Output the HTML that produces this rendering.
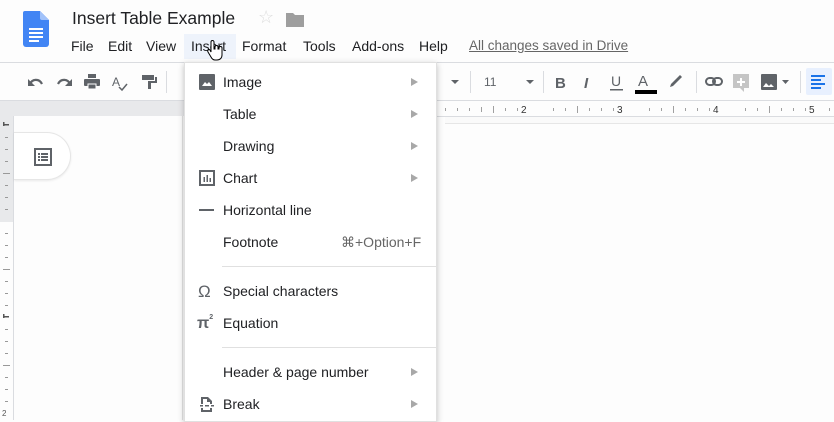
<!DOCTYPE html>
<html><head><meta charset="utf-8"><style>
*{margin:0;padding:0;box-sizing:border-box}
body{width:834px;height:420px;overflow:hidden;background:#fdfdfd;font-family:"Liberation Sans",Arial,sans-serif;position:relative;color:#222}
.a{position:absolute}
.mi{position:absolute;left:223px;font-size:14px;color:#202124}
.arr{position:absolute;left:411px;width:0;height:0;border-left:7px solid #a8a8a8;border-top:4px solid transparent;border-bottom:4px solid transparent}
</style></head><body>
<svg class="a" style="left:23px;top:11px" width="26" height="36" viewBox="0 0 26 36"><path d="M2 0h15l9 9v24a3 3 0 0 1-3 3H3a3 3 0 0 1-3-3V2a2 2 0 0 1 2-2z" fill="#4285f4"/><path d="M17 0l9 9h-7a2 2 0 0 1-2-2z" fill="#a1c2fa"/><rect x="6" y="17" width="14" height="2" fill="#fff"/><rect x="6" y="21" width="14" height="2" fill="#fff"/><rect x="6" y="25" width="14" height="2" fill="#fff"/><rect x="6" y="29" width="10" height="2" fill="#fff"/></svg>
<div class="a" style="left:72px;top:8px;font-size:17.5px;color:#202124">Insert Table Example</div>
<div class="a" style="left:258px;top:7px;font-size:18px;color:#ddd">☆</div>
<svg class="a" style="left:286px;top:12px" width="18" height="15"><path d="M0 1h7l2 2h9v12H0z" fill="#9e9e9e"/></svg>
<div class="a" style="left:184px;top:34px;width:52px;height:25px;background:#eef3fb"></div>
<div class="a" style="top:38px;left:0;font-size:14px;color:#202124;white-space:nowrap">
<span class="a" style="left:71px">File</span><span class="a" style="left:108px">Edit</span><span class="a" style="left:146px">View</span><span class="a" style="left:191px">Insert</span><span class="a" style="left:242px">Format</span><span class="a" style="left:303px">Tools</span><span class="a" style="left:352px">Add-ons</span><span class="a" style="left:419px">Help</span><span class="a" style="left:469px;color:#666;text-decoration:underline;font-size:13.5px">All changes saved in Drive</span></div>
<div class="a" style="left:0;top:62px;width:834px;height:1px;background:#dadce0"></div>
<div class="a" style="left:0;top:100px;width:834px;height:16px;background:#e8e9eb"></div>
<div class="a" style="left:0;top:100px;width:834px;height:1px;background:#dadce0"></div>
<div class="a" style="left:437px;top:101px;width:397px;height:16px;background:#fdfdfd;border-bottom:1px solid #dadce0"></div>
<div class="a" style="left:445px;top:117px;width:389px;height:7px;background:#fafafa;border-bottom:1px solid #e6e6e6"></div>
<svg class="a" style="left:0;top:63px" width="834" height="37" fill="#5f6368">
<path d="M30 21c2-5 9-6 12 0" stroke="#5f6368" stroke-width="2.2" fill="none"/><path d="M28 16v7h7z"/>
<path d="M70 21c-2-5-9-6-12 0" stroke="#5f6368" stroke-width="2.2" fill="none"/><path d="M72 16v7h-7z"/>
<rect x="84" y="16" width="16" height="7" rx="1"/><rect x="88" y="11" width="8" height="4"/><rect x="88" y="21" width="8" height="5" fill="#5f6368" stroke="#fff" stroke-width="1"/>
<text x="112" y="23" font-size="12" font-family="Liberation Sans">A</text><path d="M119 24l3 3 5-6" stroke="#5f6368" stroke-width="1.5" fill="none"/>
<path d="M142 12h12v5h-12zM155 14h2v6h-6v6h-3v-8h7z"/>
<rect x="166" y="8" width="1" height="22" fill="#dadce0"/>
<path d="M451 17h8l-4 4z"/><rect x="470" y="8" width="1" height="22" fill="#dadce0"/>
<text x="484" y="23" font-size="12" font-family="Liberation Sans">11</text><path d="M526 17h8l-4 4z"/><rect x="543" y="8" width="1" height="22" fill="#dadce0"/>
<text x="555" y="25" font-size="15" font-weight="bold" font-family="Liberation Sans">B</text>
<text x="584" y="25" font-size="15" font-style="italic" font-weight="bold" font-family="Liberation Sans">I</text>
<text x="611" y="23" font-size="14" font-family="Liberation Sans">U</text><rect x="610" y="26" width="13" height="1.5"/>
<text x="638" y="23" font-size="15" font-family="Liberation Sans">A</text><rect x="635" y="27" width="22" height="4" fill="#000"/>
<path d="M670 24l3-1 9-9-2-2-9 9z"/><rect x="696" y="8" width="1" height="22" fill="#dadce0"/>
<rect x="706" y="15" width="9" height="7" rx="3.5" fill="none" stroke="#5f6368" stroke-width="2"/><rect x="713" y="15" width="9" height="7" rx="3.5" fill="none" stroke="#5f6368" stroke-width="2"/>
<rect x="733" y="11" width="16" height="14" fill="#c5c5c5"/><path d="M744 25v4l-4-4z" fill="#c5c5c5"/><path d="M740 15h2v3h3v2h-3v3h-2v-3h-3v-2h3z" fill="#fff"/>
<rect x="761" y="11" width="16" height="16" rx="1"/><path d="M763 24l3-4 3 3 2-2 3 3z" fill="#fff"/><path d="M782 17h7l-3.5 4z"/>
<rect x="800" y="8" width="1" height="22" fill="#dadce0"/>
<rect x="806" y="5" width="26" height="27" rx="2" fill="#e8f0fe"/>
<g fill="#1a73e8"><rect x="811" y="12" width="14" height="2"/><rect x="811" y="16" width="10" height="2"/><rect x="811" y="20" width="14" height="2"/><rect x="811" y="24" width="10" height="2"/></g>
</svg>
<svg class="a" style="left:437px;top:101px" width="397" height="16">
<g fill="#a0a0a0">
<rect x="8" y="7" width="1" height="3"/><rect x="20" y="7" width="1" height="3"/><rect x="32" y="7" width="1" height="3"/><rect x="44" y="6" width="1" height="5"/><rect x="56" y="5" width="1" height="7"/><rect x="68" y="7" width="1" height="3"/><rect x="80" y="7" width="1" height="3"/>
<rect x="116" y="7" width="1" height="3"/><rect x="128" y="7" width="1" height="3"/><rect x="140" y="5" width="1" height="7"/><rect x="152" y="7" width="1" height="3"/><rect x="164" y="7" width="1" height="3"/><rect x="176" y="7" width="1" height="3"/>
<rect x="212" y="7" width="1" height="3"/><rect x="224" y="7" width="1" height="3"/><rect x="236" y="5" width="1" height="7"/><rect x="248" y="7" width="1" height="3"/><rect x="260" y="7" width="1" height="3"/><rect x="272" y="7" width="1" height="3"/>
<rect x="308" y="7" width="1" height="3"/><rect x="320" y="7" width="1" height="3"/><rect x="332" y="5" width="1" height="7"/><rect x="344" y="7" width="1" height="3"/><rect x="356" y="7" width="1" height="3"/><rect x="368" y="7" width="1" height="3"/><rect x="392" y="7" width="1" height="3"/>
</g>
<g font-size="10" fill="#333" font-family="Liberation Sans"><text x="84" y="12">2</text><text x="180" y="12">3</text><text x="276" y="12">4</text><text x="372" y="12">5</text></g>
</svg>
<div class="a" style="left:0;top:116px;width:14px;height:304px;background:#fdfdfd;border-right:1px solid #dadce0"></div>
<div class="a" style="left:0;top:116px;width:14px;height:106px;background:#e8e9eb;border-right:1px solid #dadce0"></div>
<svg class="a" style="left:0;top:116px" width="13" height="304" fill="#999">
<rect x="3" y="8" width="6" height="1.5" fill="#555"/><rect x="3" y="6" width="1.5" height="4" fill="#555"/>
<rect x="5" y="21" width="3" height="1"/><rect x="5" y="33" width="3" height="1"/><rect x="5" y="45" width="3" height="1"/><rect x="3" y="57" width="7" height="1"/><rect x="5" y="69" width="3" height="1"/><rect x="5" y="81" width="3" height="1"/><rect x="5" y="93" width="3" height="1"/><rect x="5" y="117" width="3" height="1"/><rect x="5" y="129" width="3" height="1"/><rect x="5" y="141" width="3" height="1"/><rect x="3" y="153" width="7" height="1"/><rect x="5" y="165" width="3" height="1"/><rect x="5" y="177" width="3" height="1"/><rect x="5" y="189" width="3" height="1"/>
<rect x="3" y="200" width="6" height="1.5" fill="#555"/><rect x="3" y="198" width="1.5" height="4" fill="#555"/>
<rect x="5" y="213" width="3" height="1"/><rect x="5" y="225" width="3" height="1"/><rect x="5" y="237" width="3" height="1"/><rect x="3" y="249" width="7" height="1"/><rect x="5" y="261" width="3" height="1"/><rect x="5" y="273" width="3" height="1"/><rect x="5" y="285" width="3" height="1"/>
<text x="2" y="300" font-size="8" fill="#555" font-family="Liberation Sans">2</text>
</svg>
<div class="a" style="left:182px;top:116px;width:1px;height:304px;background:#e3e3e3"></div>
<div class="a" style="left:14px;top:132px;width:57px;height:48px;border-radius:0 24px 24px 0;background:#fff;border:1px solid #e6e6e6;border-left:none;box-shadow:0 1px 2px rgba(0,0,0,.08)"></div>
<svg class="a" style="left:34px;top:148px" width="18" height="18"><rect x="1" y="1" width="16" height="16" fill="none" stroke="#5f6368" stroke-width="2"/><g fill="#5f6368"><rect x="4" y="5" width="2" height="2"/><rect x="7" y="5" width="7" height="2"/><rect x="4" y="8" width="2" height="2"/><rect x="7" y="8" width="7" height="2"/><rect x="4" y="11" width="2" height="2"/><rect x="7" y="11" width="7" height="2"/></g></svg>
<div class="a" style="left:184px;top:62px;width:253px;height:360px;background:#fff;box-shadow:0 2px 6px rgba(0,0,0,.25);border:1px solid #e0e0e0"></div>
<div class="mi" style="top:74px">Image</div><div class="arr" style="top:78px"></div>
<svg class="a" style="left:199px;top:74px" width="16" height="16"><rect width="16" height="16" rx="1" fill="#5f6368"/><path d="M3 12l3-4 2 2 2-2 3 4z" fill="#fff"/></svg>
<div class="mi" style="top:106px">Table</div><div class="arr" style="top:110px"></div>
<div class="mi" style="top:138px">Drawing</div><div class="arr" style="top:142px"></div>
<svg class="a" style="left:199px;top:170px" width="16" height="16"><rect x="1" y="1" width="14" height="14" fill="none" stroke="#5f6368" stroke-width="2"/><g fill="#5f6368"><rect x="4.5" y="7" width="1.5" height="5"/><rect x="7.5" y="5" width="1.5" height="7"/><rect x="10.5" y="8" width="1.5" height="4"/></g></svg>
<div class="mi" style="top:170px">Chart</div><div class="arr" style="top:174px"></div>
<div class="a" style="left:199px;top:209px;width:15px;height:2px;background:#5f6368"></div>
<div class="mi" style="top:202px">Horizontal line</div>
<div class="mi" style="top:234px">Footnote</div>
<div class="a" style="left:341px;top:234px;font-size:14px;color:#666">⌘+Option+F</div>
<div class="a" style="left:222px;top:266px;width:215px;height:1px;background:#e0e0e0"></div>
<div class="a" style="left:198px;top:282px;font-size:17px;color:#5f6368">Ω</div>
<div class="mi" style="top:283px">Special characters</div>
<div class="a" style="left:197px;top:314px;font-size:16px;color:#5f6368;font-weight:bold">π<sup style="font-size:7px;vertical-align:9px">2</sup></div>
<div class="mi" style="top:315px">Equation</div>
<div class="a" style="left:222px;top:347px;width:215px;height:1px;background:#e0e0e0"></div>
<div class="mi" style="top:364px">Header &amp; page number</div><div class="arr" style="top:368px"></div>
<svg class="a" style="left:199px;top:396px" width="16" height="18" fill="#5f6368"><path d="M2 1h7l4 4v3h-2V6H8V3H4v5H2z"/><rect x="1" y="9" width="3" height="1.5"/><rect x="6" y="9" width="4" height="1.5"/><rect x="12" y="9" width="3" height="1.5"/><rect x="2" y="12" width="2" height="4"/><rect x="2" y="14" width="11" height="2"/><rect x="11" y="12" width="2" height="4"/></svg>
<div class="mi" style="top:396px">Break</div><div class="arr" style="top:400px"></div>
<svg class="a" style="left:207px;top:40px" width="16" height="22"><path d="M4 2a1.5 1.5 0 0 1 3 0v7h1V7a1.5 1.5 0 0 1 3 0v2h1V8a1.5 1.5 0 0 1 3 0v7c0 3-2 5-5 5H8c-2 0-3-1-4-3L1 12c-1-2 1-3 2-2l1 2z" fill="#fff" stroke="#000" stroke-width="1"/></svg>
</body></html>
